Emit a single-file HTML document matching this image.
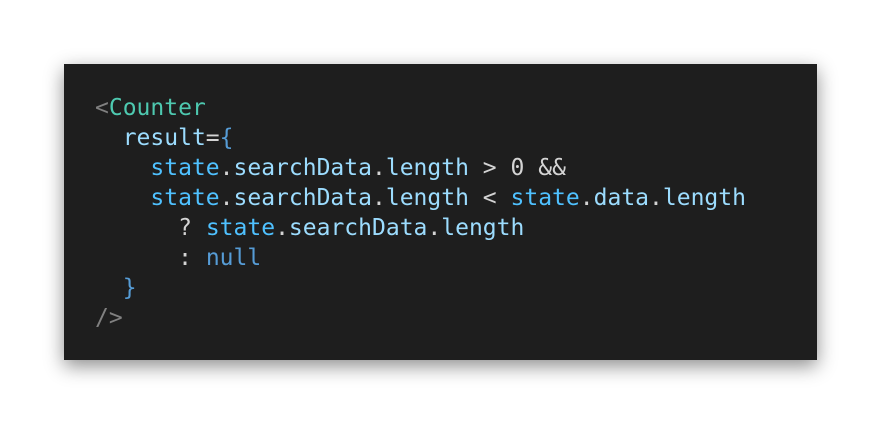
<!DOCTYPE html>
<html><head><style>
html,body{margin:0;padding:0;background:#fff;width:880px;height:425px;overflow:hidden}
.box{position:absolute;left:64px;top:64px;width:753px;height:296px;background:#1e1e1e;box-shadow:0 6px 18px rgba(0,0,0,.45)}
pre{margin:0;position:absolute;left:95px;top:93px;font-family:"DejaVu Sans Mono","Liberation Mono",monospace;font-size:23px;line-height:30px;color:#d4d4d4}
.g{color:#808080}.t{color:#4ec9b0}.a{color:#9cdcfe}.s{color:#4fc1ff}.b{color:#569cd6}.p{color:#d4d4d4}
</style></head><body>
<div class="box"></div>
<pre><span class="g">&lt;</span><span class="t">Counter</span>
  <span class="a">result</span><span class="p">=</span><span class="b">{</span>
    <span class="s">state</span><span class="p">.</span><span class="a">searchData</span><span class="p">.</span><span class="a">length</span> <span class="p">&gt;</span> <span class="p">0</span> <span class="p">&amp;&amp;</span>
    <span class="s">state</span><span class="p">.</span><span class="a">searchData</span><span class="p">.</span><span class="a">length</span> <span class="p">&lt;</span> <span class="s">state</span><span class="p">.</span><span class="a">data</span><span class="p">.</span><span class="a">length</span>
      <span class="p">?</span> <span class="s">state</span><span class="p">.</span><span class="a">searchData</span><span class="p">.</span><span class="a">length</span>
      <span class="p">:</span> <span class="b">null</span>
  <span class="b">}</span>
<span class="g">/&gt;</span></pre>
</body></html>
